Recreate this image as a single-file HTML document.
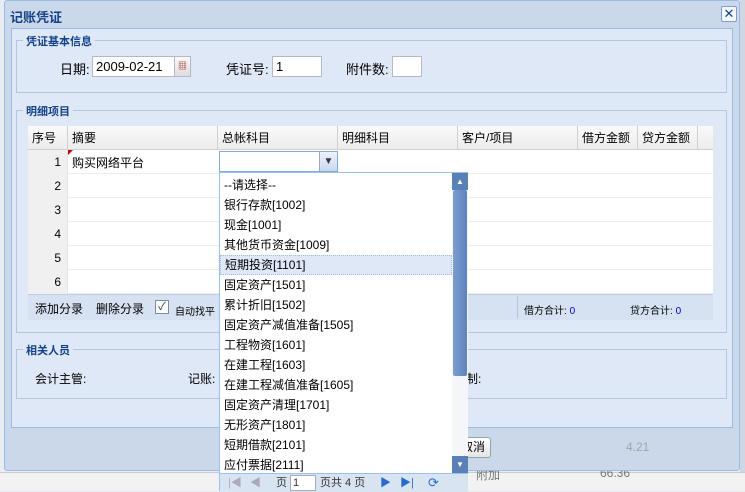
<!DOCTYPE html>
<html><head><meta charset="utf-8"><style>
*{box-sizing:border-box;margin:0;padding:0}
body{width:745px;height:491px;overflow:hidden;position:relative;background:#e9edf2;font:12px "Liberation Sans","Noto Sans CJK SC",sans-serif;color:#000}
.a{position:absolute}
.fs{position:absolute;border:1px solid #b5c5dc}
.lg{position:absolute;top:-8px;left:6px;background:#dfe8f6;padding:0 3px;font-weight:bold;color:#15428b;font-size:11px}
.inp{position:absolute;background:#fff;border:1px solid #b5b8c8;height:21px;line-height:19px;padding-left:3px;font-size:13px}
.hd{position:absolute;top:0;height:24px;line-height:24px;padding-left:4px;border-right:1px solid #d0d0d0;font-size:12px}
.row{position:absolute;left:0;width:685px;height:24px;border-bottom:1px solid #ededed}
.num{position:absolute;left:0;width:40px;height:24px;background:#f0f0f0;text-align:right;padding-right:6px;line-height:24px;border-right:1px solid #e4e4e4}
.it{height:20px;line-height:20px;padding-left:4px;font-size:12px;white-space:nowrap}
</style></head><body>
<!-- background page bits -->
<div class="a" style="left:740px;top:0;width:5px;height:491px;background:#cfd7e2"></div>
<div class="a" style="left:0;top:472px;width:745px;height:19px;background:#f2f2f2;border-top:1px solid #ccc"></div>
<div class="a" style="left:476px;top:466px;color:#777;font-size:12px">附加</div>
<div class="a" style="left:600px;top:466px;color:#777;font-size:12px">66.36</div>
<!-- dialog -->
<div class="a" style="left:4px;top:0;width:736px;height:471px;background:#cbd8ea;border:1px solid #99bbe8;border-radius:3px"></div>
<div class="a" style="left:10px;top:7px;font-weight:bold;color:#15428b;font-size:13px">记账凭证</div>
<div class="a" style="left:721px;top:6px;width:16px;height:16px;border:1px solid #7d9fcf;background:#f4f8fd;border-radius:2px;text-align:center;line-height:13px;font-size:13px;color:#15428b">✕</div>
<div class="a" style="left:11px;top:28px;width:722px;height:400px;background:#dfe8f6;border:1px solid #99bbe8"></div>
<div class="a" style="left:626px;top:440px;color:#9aa;font-size:12px">4.21</div>
<div class="a" style="left:455px;top:437px;width:36px;height:21px;background:linear-gradient(#fff,#e4e4e4);border:1px solid #8aa;border-radius:3px;font-size:12px;line-height:19px;padding-left:5px">取消</div>

<!-- fieldset 1 -->
<div class="fs" style="left:16px;top:40px;width:711px;height:53px"><div class="lg">凭证基本信息</div></div>
<div class="a" style="left:60px;top:59px;font-size:13px">日期:</div>
<div class="inp" style="left:92px;top:56px;width:83px">2009-02-21</div>
<div class="a" style="left:174px;top:56px;width:17px;height:21px;background:linear-gradient(#fafafa,#ddd);border:1px solid #b5b8c8;font-size:9px;text-align:center;line-height:19px;color:#a33">▦</div>
<div class="a" style="left:226px;top:59px;font-size:13px">凭证号:</div>
<div class="inp" style="left:272px;top:56px;width:50px">1</div>
<div class="a" style="left:346px;top:59px;font-size:13px">附件数:</div>
<div class="inp" style="left:392px;top:56px;width:30px"></div>

<!-- fieldset 2 -->
<div class="fs" style="left:16px;top:110px;width:711px;height:223px"><div class="lg">明细项目</div></div>
<div class="a" style="left:28px;top:126px;width:685px;height:168px;background:#fff">
 <div class="a" style="left:0;top:0;width:685px;height:24px;background:linear-gradient(#fafafa,#ececec);border-bottom:1px solid #d0d0d0"></div>
 <div class="hd" style="left:0;width:40px">序号</div>
 <div class="hd" style="left:40px;width:150px">摘要</div>
 <div class="hd" style="left:190px;width:120px">总帐科目</div>
 <div class="hd" style="left:310px;width:120px">明细科目</div>
 <div class="hd" style="left:430px;width:120px">客户/项目</div>
 <div class="hd" style="left:550px;width:60px">借方金额</div>
 <div class="hd" style="left:610px;width:60px">贷方金额</div>
 <div class="row" style="top:24px"><div class="num">1</div><div class="a" style="left:44px;top:4px;font-size:12px">购买网络平台</div><div class="a" style="left:40px;top:0;border-top:5px solid #c00;border-right:5px solid transparent"></div></div>
 <div class="row" style="top:48px"><div class="num">2</div></div>
 <div class="row" style="top:72px"><div class="num">3</div></div>
 <div class="row" style="top:96px"><div class="num">4</div></div>
 <div class="row" style="top:120px"><div class="num">5</div></div>
 <div class="row" style="top:144px"><div class="num">6</div></div>
</div>
<div class="a" style="left:28px;top:294px;width:685px;height:26px;background:#d6e2f2;border-top:1px solid #c0cde0"></div>
<div class="a" style="left:35px;top:300px;font-size:12px">添加分录</div>
<div class="a" style="left:96px;top:300px;font-size:12px">删除分录</div>
<div class="a" style="left:155px;top:300px;width:14px;height:14px;border:1px solid #7a8ba3;background:#fff;font-size:11px;line-height:12px;text-align:center;color:#245">✓</div>
<div class="a" style="left:175px;top:303px;font-size:10px">自动找平</div>
<div class="a" style="left:517px;top:296px;width:1px;height:22px;background:#b8c6da"></div>
<div class="a" style="left:524px;top:302px;font-size:10px">借方合计: <span style="color:#00c">0</span></div>
<div class="a" style="left:630px;top:302px;font-size:10px">贷方合计: <span style="color:#00c">0</span></div>

<!-- fieldset 3 -->
<div class="fs" style="left:16px;top:349px;width:711px;height:50px"><div class="lg">相关人员</div></div>
<div class="a" style="left:35px;top:370px;font-size:12px">会计主管:</div>
<div class="a" style="left:188px;top:370px;font-size:12px">记账:</div>
<div class="a" style="left:466px;top:370px;font-size:12px">制:</div>

<!-- combo -->
<div class="a" style="left:219px;top:151px;width:119px;height:21px;background:#fff;border:1px solid #7eadd9"></div>
<div class="a" style="left:319px;top:152px;width:18px;height:19px;background:linear-gradient(#eef3fb,#c9d8ee);border-left:1px solid #9ab;text-align:center;font-size:10px;line-height:19px;color:#335">▼</div>
<!-- dropdown -->
<div class="a" style="left:219px;top:172px;width:249px;height:319px;background:#fff;border:1px solid #98c0f4">
 <div class="a" style="left:0;top:2px;width:232px">
  <div class="it">--请选择--</div><div class="it">银行存款[1002]</div><div class="it">现金[1001]</div><div class="it">其他货币资金[1009]</div>
  <div class="it" style="background:#dfe8f6;border:1px dotted #a3bae9;line-height:18px">短期投资[1101]</div>
  <div class="it">固定资产[1501]</div><div class="it">累计折旧[1502]</div><div class="it">固定资产减值准备[1505]</div>
  <div class="it">工程物资[1601]</div><div class="it">在建工程[1603]</div><div class="it">在建工程减值准备[1605]</div>
  <div class="it">固定资产清理[1701]</div><div class="it">无形资产[1801]</div><div class="it">短期借款[2101]</div><div class="it">应付票据[2111]</div>
 </div>
 <div class="a" style="left:232px;top:0;width:16px;height:300px;background:#f4f6fa"></div>
 <div class="a" style="left:232px;top:0;width:16px;height:17px;background:#5a80b8;color:#fff;font-size:8px;text-align:center;line-height:17px">▲</div>
 <div class="a" style="left:233px;top:17px;width:14px;height:186px;background:linear-gradient(90deg,#7d9ed0,#5d82bd);border-radius:2px"></div>
 <div class="a" style="left:232px;top:283px;width:16px;height:17px;background:#5a80b8;color:#fff;font-size:8px;text-align:center;line-height:17px">▼</div>
 <div class="a" style="left:0;top:300px;width:248px;height:19px;background:#d9e4f3;border-top:1px solid #98c0f4;font-size:11px;line-height:18px;color:#333">
  <span class="a" style="left:8px;color:#aab">|◀</span><span class="a" style="left:30px;color:#aab">◀</span>
  <span class="a" style="left:56px">页</span><span class="a" style="left:70px;top:1px;width:26px;height:16px;background:#fff;border:1px solid #aab;line-height:14px;padding-left:2px">1</span>
  <span class="a" style="left:100px">页共 4 页</span>
  <span class="a" style="left:160px;color:#2a6ad0">▶</span><span class="a" style="left:180px;color:#2a6ad0">▶|</span>
  <span class="a" style="left:208px;color:#2a6ad0;font-size:13px">⟳</span>
 </div>
</div>
</body></html>
